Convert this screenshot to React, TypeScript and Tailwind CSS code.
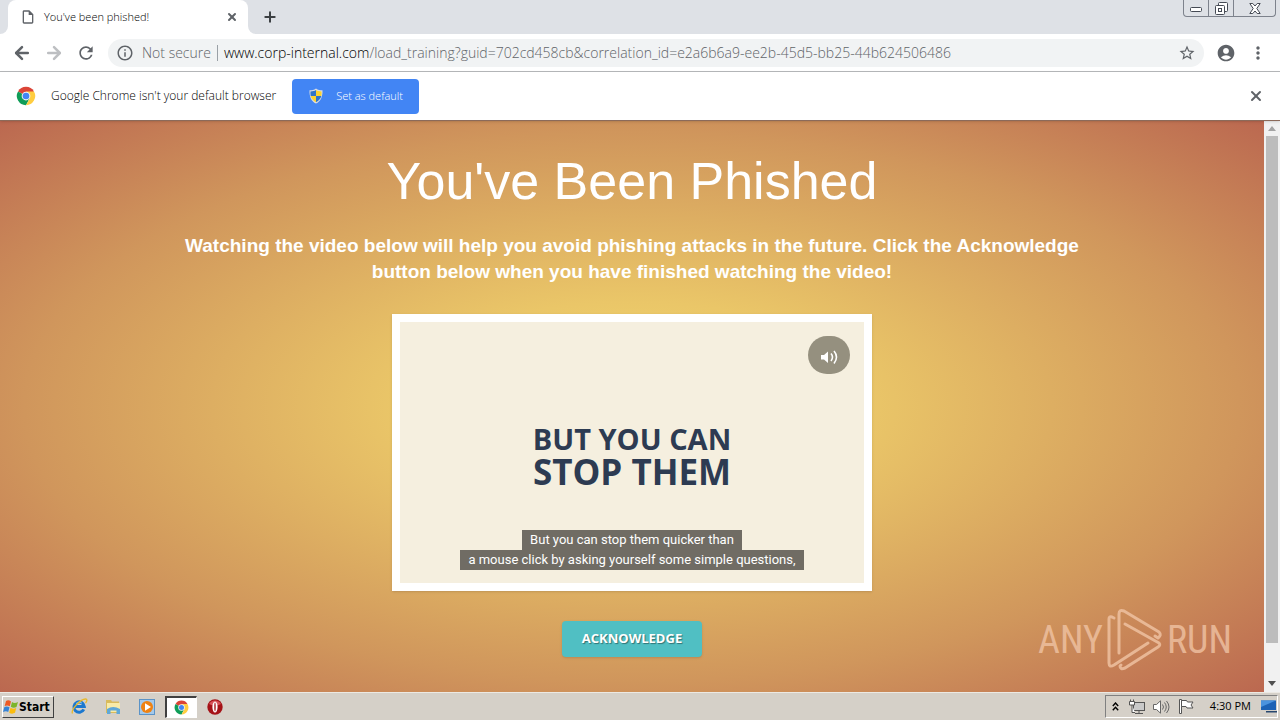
import React from 'react';
import { ArrowLeft, ArrowRight, Plus, X } from 'lucide-react';
import {
  MdAccountCircle,
  MdInfoOutline,
  MdMoreVert,
  MdOutlineInsertDriveFile,
  MdRefresh,
  MdStarBorder,
} from 'react-icons/md';

const captions = [
  'But you can stop them quicker than',
  'a mouse click by asking yourself some simple questions,',
];

function ChromeLogo({ className }: { className?: string }) {
  return (
    <svg viewBox="0 0 48 48" className={className} aria-hidden="true">
      <circle cx="24" cy="24" r="22" fill="#fff" />
      <path d="M24 24 L4.9 13 A22 22 0 0 1 43.1 13 Z" fill="#db4437" />
      <path d="M24 24 L4.9 13 A22 22 0 0 0 24 46 L33 29 Z" fill="#0f9d58" />
      <path d="M24 13 H43.1 A22 22 0 0 1 24 46 L33.5 29.5 Z" fill="#ffcd40" />
      <circle cx="24" cy="24" r="10.5" fill="#f1f1f1" />
      <circle cx="24" cy="24" r="8" fill="#4285f4" />
    </svg>
  );
}

function ShieldLogo() {
  return (
    <svg viewBox="0 0 16 16" className="h-4 w-4" aria-hidden="true">
      <path d="M8 0.5 C10 2 12 2.3 14.5 2.3 C14.8 9 12.5 13.5 8 15.6 C3.5 13.5 1.2 9 1.5 2.3 C4 2.3 6 2 8 0.5 Z" fill="#d9dde3" />
      <path d="M8 2 V8 H2.7 C2.4 6.5 2.4 5 2.5 3.5 C4.8 3.4 6.5 3 8 2 Z" fill="#2f74c8" />
      <path d="M8 2 V8 H13.3 C13.6 6.5 13.6 5 13.5 3.5 C11.2 3.4 9.5 3 8 2 Z" fill="#fbd32f" />
      <path d="M8 8 V14.3 C5.2 12.9 3.4 10.6 2.7 8 Z" fill="#fbd32f" />
      <path d="M8 8 V14.3 C10.8 12.9 12.6 10.6 13.3 8 Z" fill="#2f74c8" />
    </svg>
  );
}

function WindowControls() {
  return (
    <div className="flex h-[17px] rounded-b border border-t-0 border-[#7d828c] text-[#454a54]">
      <button aria-label="Minimize" className="flex w-6 items-end justify-center pb-1">
        <svg viewBox="0 0 12 5" className="h-[5px] w-3">
          <rect x="0.5" y="0.5" width="11" height="4" rx="1" fill="#fff" stroke="currentColor" />
        </svg>
      </button>
      <button aria-label="Restore" className="flex w-[26px] items-center justify-center border-x border-[#7d828c]">
        <svg viewBox="0 0 13 13" className="h-[13px] w-[13px]">
          <rect x="3.5" y="0.5" width="9" height="9" rx="1" fill="#fff" stroke="currentColor" />
          <rect x="0.5" y="3.5" width="9" height="9" rx="1" fill="#fff" stroke="currentColor" />
          <rect x="3.5" y="6.5" width="3" height="3" fill="none" stroke="currentColor" />
        </svg>
      </button>
      <button aria-label="Close window" className="flex w-[41px] items-center justify-center">
        <svg viewBox="0 0 12 11" className="h-[11px] w-3">
          <path d="M0.8 0.5 H3.8 L6 3 L8.2 0.5 H11.2 L7.8 5.5 L11.2 10.5 H8.2 L6 8 L3.8 10.5 H0.8 L4.2 5.5 Z" fill="#fff" stroke="currentColor" />
        </svg>
      </button>
    </div>
  );
}

function TabStrip() {
  return (
    <div className="flex h-[34px] shrink-0 justify-between bg-[#dee1e6]">
      <div className="flex">
        <div className="flex w-2 items-end bg-white">
          <div className="h-full w-full rounded-br-lg bg-[#dee1e6]" />
        </div>
        <div className="bg-[#dee1e6]">
          <div className="flex h-full w-60 items-center rounded-t-lg bg-white pr-2 pl-3">
            <MdOutlineInsertDriveFile className="h-4 w-4 text-[#5f6368]" />
            <span className="ml-2 flex-1 text-[11px] font-light text-black">You've been phished!</span>
            <button aria-label="Close tab" className="flex h-4 w-4 items-center justify-center text-[#5f6368]">
              <X className="h-3 w-3" strokeWidth={4} />
            </button>
          </div>
        </div>
        <div className="w-2 bg-white">
          <div className="h-full w-full rounded-bl-lg bg-[#dee1e6]" />
        </div>
        <button aria-label="New tab" className="flex w-7 items-center justify-center text-[#3c4043]">
          <Plus className="h-4 w-4" strokeWidth={3} />
        </button>
      </div>
      <div className="pr-1">
        <WindowControls />
      </div>
    </div>
  );
}

function Toolbar() {
  return (
    <div className="flex h-[38px] shrink-0 items-center border-b border-[#b6b8ba] bg-white pr-3 pl-3 text-[#5f6368]">
      <button aria-label="Back" className="mr-3 flex w-5 justify-center">
        <ArrowLeft className="h-5 w-5" strokeWidth={3} />
      </button>
      <button aria-label="Forward" className="mr-3 flex w-5 justify-center text-[#bdbfc2]">
        <ArrowRight className="h-5 w-5" strokeWidth={3} />
      </button>
      <button aria-label="Reload" className="mr-3 flex w-5 justify-center">
        <MdRefresh className="h-5 w-5" />
      </button>
      <div className="flex h-7 flex-1 items-center rounded-full bg-[#f1f3f4] pr-2 pl-2 text-[14px] font-light">
        <MdInfoOutline className="h-[18px] w-[18px]" />
        <label htmlFor="url" className="ml-2 flex items-center whitespace-nowrap">
          <span>Not secure</span>
          <span className="mx-1.5 h-4 w-px bg-[#9aa0a6]" />
          <span className="text-black">www.corp-internal.com</span>
        </label>
        <input
          id="url"
          type="text"
          className="min-w-0 flex-1 bg-transparent text-[#5f6368] outline-none"
          defaultValue="/load_training?guid=702cd458cb&correlation_id=e2a6b6a9-ee2b-45d5-bb25-44b624506486"
        />
        <button aria-label="Bookmark this page">
          <MdStarBorder className="h-[18px] w-[18px]" />
        </button>
      </div>
      <button aria-label="Profile" className="ml-3">
        <MdAccountCircle className="h-5 w-5" />
      </button>
      <button aria-label="Menu" className="ml-3">
        <MdMoreVert className="h-5 w-5" />
      </button>
    </div>
  );
}

function InfoBar() {
  return (
    <div className="z-10 flex h-[49px] shrink-0 items-center border-b border-[#8b6a5a] bg-white pr-4 pl-4 shadow">
      <ChromeLogo className="h-5 w-5" />
      <span className="mr-4 ml-[15px] text-[12px] font-light text-black">Google Chrome isn't your default browser</span>
      <button className="flex h-[35px] items-center gap-3 rounded bg-[#4285f4] px-4 text-[11px] font-light text-white">
        <ShieldLogo />
        Set as default
      </button>
      <button aria-label="Dismiss" className="ml-auto text-[#5f6368]">
        <X className="h-4 w-4" strokeWidth={3} />
      </button>
    </div>
  );
}

function Video() {
  return (
    <div className="mt-[29px] flex h-[277px] w-[480px] flex-col border-8 border-white bg-[#f5efdf] shadow">
      <div className="flex justify-end pt-3.5 pr-3.5">
        <button aria-label="Volume" className="flex h-[38px] w-[42px] items-center justify-center rounded-[19px] bg-[#95907f] text-white">
          <svg viewBox="0 0 18 14" className="mt-1 h-3.5 w-[18px]" fill="none" stroke="currentColor">
            <path d="M1 5 H4 L8 1.5 V13 L4 9.5 H1 Z" fill="currentColor" stroke="none" />
            <path d="M11 3.5 Q14 7 11 11" strokeWidth="1.6" />
            <path d="M14 1 Q19 7 14 13.5" strokeWidth="1.6" />
          </svg>
        </button>
      </div>
      <div className="mt-12 text-center font-['Open_Sans','Noto_Sans',sans-serif] font-bold text-[#2d3b52]">
        <p className="text-[29px] leading-[33px]">BUT YOU CAN</p>
        <p className="text-[35px] leading-[33px]">STOP THEM</p>
      </div>
      <div className="mt-auto flex flex-col items-center pb-[13px] font-[Roboto,sans-serif] text-[13px] leading-5 text-white">
        {captions.map((line) => (
          <span key={line} className="bg-[#706c64] px-2">
            {line}
          </span>
        ))}
      </div>
    </div>
  );
}

function Watermark() {
  return (
    <div className="absolute right-8 bottom-5 flex items-center gap-1 font-['Liberation_Sans_Narrow','Roboto_Condensed',sans-serif] text-[38px] leading-[62px] text-[#f0c4a5]/80">
      <span>ANY</span>
      <svg viewBox="0 0 56 64" className="h-16 w-14" fill="none" stroke="currentColor" strokeWidth="3" strokeLinecap="round" strokeLinejoin="round">
        <path d="M7 10 L5 9 Q2 8 2 11 V55 Q2 60 7 57 L41 35" />
        <path d="M12 45 V6 Q12 1 17 3 L52 24 Q55 27 51 30 L48 28" />
        <path d="M18 16 L52 35 Q54 37 51 39 L18 60 Q13 62 13 58 L14 57" />
      </svg>
      <span>RUN</span>
    </div>
  );
}

function PageScrollbar() {
  return (
    <div className="flex w-4 shrink-0 flex-col bg-[#f1f1f1]">
      <button aria-label="Scroll up" className="flex h-[15px] items-center justify-center">
        <svg viewBox="0 0 8 5" className="h-[5px] w-2">
          <path d="M0 5 L4 0 L8 5 Z" fill="#a3a3a3" />
        </svg>
      </button>
      <div className="flex-1 px-0.5">
        <div className="h-[94%] bg-[#bcbcbc]" />
      </div>
      <button aria-label="Scroll down" className="flex h-[17px] items-center justify-center">
        <svg viewBox="0 0 8 5" className="h-[5px] w-2">
          <path d="M0 0 L4 5 L8 0 Z" fill="#505050" />
        </svg>
      </button>
    </div>
  );
}

function Taskbar() {
  return (
    <footer className="flex h-7 shrink-0 items-center border-t border-[#ece9e3] bg-[#d5d0c8] pl-0.5 text-black">
      <button className="flex h-[22px] w-[52px] items-center border border-t-white border-r-[#404040] border-b-[#404040] border-l-white font-['DejaVu_Sans_Condensed','DejaVu_Sans',sans-serif] text-[12px] font-bold">
        <svg viewBox="0 0 16 16" className="h-4 w-4 shrink-0">
          <path d="M3 2 Q5.5 0.5 8 2.5 L6.8 7.3 Q4.5 5.8 1.7 7 Z" fill="#ee5a24" />
          <path d="M9 3 Q11.5 5 15 3 L13.5 8 Q10.5 9.5 7.8 7.8 Z" fill="#7cb52a" />
          <path d="M1.4 8 Q4 6.8 6.5 8.3 L5.2 13 Q3 11.5 0 13 Z" fill="#3583d6" />
          <path d="M7.5 8.8 Q10.5 10.5 13.2 9 L12 13.8 Q9 15.5 6.2 13.7 Z" fill="#fbbc0d" />
        </svg>
        Start
      </button>
      <div className="ml-[17px] flex items-center">
        <a href="#ie" aria-label="Internet Explorer" className="mr-[17px]">
          <svg viewBox="0 0 17 17" className="h-[17px] w-[17px]" fill="none">
            <path d="M12.8 11.4 A5.2 5.2 0 1 1 13.3 8.6 H4.5" stroke="#1c78cf" strokeWidth="3" />
            <path d="M5 5.5 Q8 3 11 5" stroke="#7fc4f5" strokeWidth="1" />
            <path d="M1.5 15.5 C-0.5 12 9.5 1 14.5 1 C17 1 15.5 4 14.5 5" stroke="#e8b82a" strokeWidth="1.3" />
          </svg>
        </a>
        <a href="#explorer" aria-label="Windows Explorer" className="mr-[18px]">
          <svg viewBox="0 0 16 16" className="h-4 w-4">
            <path d="M1 1 H6 L7 2.5 H14 V14 H1 Z" fill="#d9bb5c" />
            <path d="M2 4 H15 V13 H2 Z" fill="#f8eba8" />
            <path d="M2 10 Q8 6 15 10 V15 H11.5 V11.5 H5.5 V15 H2 Z" fill="#5fa8d8" />
          </svg>
        </a>
        <a href="#media" aria-label="Media Player" className="mr-2.5">
          <svg viewBox="0 0 16 16" className="h-4 w-4">
            <rect x="0.5" y="0.5" width="15" height="15" fill="#a4c9ea" stroke="#5b93c7" />
            <circle cx="8" cy="8" r="6" fill="#ef8212" />
            <path d="M6 4.3 L12 8 L6 11.7 Z" fill="#fff" />
          </svg>
        </a>
        <button aria-label="Google Chrome" className="mr-2.5 flex h-[22px] w-8 items-center justify-center border-t-2 border-r border-b border-l-2 border-t-[#404040] border-r-white border-b-white border-l-[#404040] bg-white">
          <ChromeLogo className="h-[15px] w-[15px]" />
        </button>
        <a href="#opera" aria-label="Opera">
          <svg viewBox="0 0 16 16" className="h-4 w-4">
            <circle cx="8" cy="8" r="7.7" fill="#a51217" />
            <path d="M2 5 A7 7 0 0 1 14 5 Q8 8 2 5" fill="#d8545a" />
            <ellipse cx="8" cy="8" rx="2.6" ry="5.5" fill="#fff" />
            <ellipse cx="8" cy="8" rx="0.7" ry="4.4" fill="#a51217" />
          </svg>
        </a>
      </div>
      <div className="mr-0.5 ml-auto flex h-[23px] items-center border border-t-[#808080] border-r-white border-b-white border-l-[#808080] pl-1.5 text-[11px]">
        <button aria-label="Show hidden icons" className="mr-2.5">
          <svg viewBox="0 0 7 9" className="h-[9px] w-[7px]" fill="none" stroke="#000" strokeWidth="1.4">
            <path d="M0.8 4 L3.5 1 L6.2 4 M0.8 8.2 L3.5 5.2 L6.2 8.2" />
          </svg>
        </button>
        <svg viewBox="0 0 16 15" className="mr-2 h-[15px] w-4" fill="none" stroke="#555">
          <rect x="4.5" y="3.5" width="11" height="8" fill="#c9c9c9" />
          <path d="M6 14.5 H14 M10 11.5 V14" />
          <path d="M1.5 0.5 V3 M4.5 0.5 V3 M0.5 2.5 H5.5 V6 H0.5 Z M3 6 V13.5 H6" fill="#fff" />
        </svg>
        <svg viewBox="0 0 17 14" className="mr-2 h-3.5 w-[17px]" fill="none" stroke="#666">
          <path d="M0.5 4.5 H3.5 L7.5 0.8 V13.2 L3.5 9.5 H0.5 Z" fill="#fff" />
          <path d="M9.5 4.5 Q11.5 7 9.5 9.5 M11.5 2.5 Q15 7 11.5 11.5 M13.5 1 Q18.5 7 13.5 13" />
        </svg>
        <svg viewBox="0 0 16 15" className="mr-4 h-[15px] w-4" fill="none" stroke="#555">
          <path d="M1.5 0.5 H3.5 V14.5 H1.5 Z" fill="#fff" />
          <path d="M3.5 1.5 H8.5 L9.5 3 H15 L13 6 L15 9 H9 L8 7.5 H3.5 Z" fill="#fff" />
        </svg>
        <time className="mr-2.5">4:30 PM</time>
        <svg viewBox="0 0 16 13" className="h-[13px] w-4">
          <path d="M0 0.5 H15 V10 H0 Z" fill="#1d62b5" />
          <path d="M0 0.5 H15 L0 7 Z" fill="#4b93de" />
          <path d="M5 11 H16 V12.5 H5 Z" fill="#27476e" />
        </svg>
      </div>
    </footer>
  );
}

export default function App() {
  return (
    <div className="flex h-screen flex-col overflow-hidden bg-white font-['Open_Sans','Noto_Sans',sans-serif]">
      <TabStrip />
      <Toolbar />
      <InfoBar />
      <div className="flex min-h-0 flex-1">
        <main className="relative flex flex-1 flex-col items-center bg-[radial-gradient(ellipse_at_center,#f4dc70_0%,#eac668_26%,#d0965c_68%,#bb6850_100%)] font-['Liberation_Sans',Arial,sans-serif] text-white">
          <h1 className="mt-[30px] text-[52px] leading-[60px]">You've Been Phished</h1>
          <p className="mt-[22px] max-w-[940px] px-4 text-center text-[19px] leading-[26px] font-bold">
            Watching the video below will help you avoid phishing attacks in the future. Click the Acknowledge button
            below when you have finished watching the video!
          </p>
          <Video />
          <button className="mt-[30px] h-9 rounded bg-[#50bfc3] px-5 font-['Open_Sans','Noto_Sans',sans-serif] text-[13px] font-bold shadow [text-shadow:1px_1px_1px_rgba(0,0,0,0.4)]">
            ACKNOWLEDGE
          </button>
          <Watermark />
        </main>
        <PageScrollbar />
      </div>
      <Taskbar />
    </div>
  );
}
